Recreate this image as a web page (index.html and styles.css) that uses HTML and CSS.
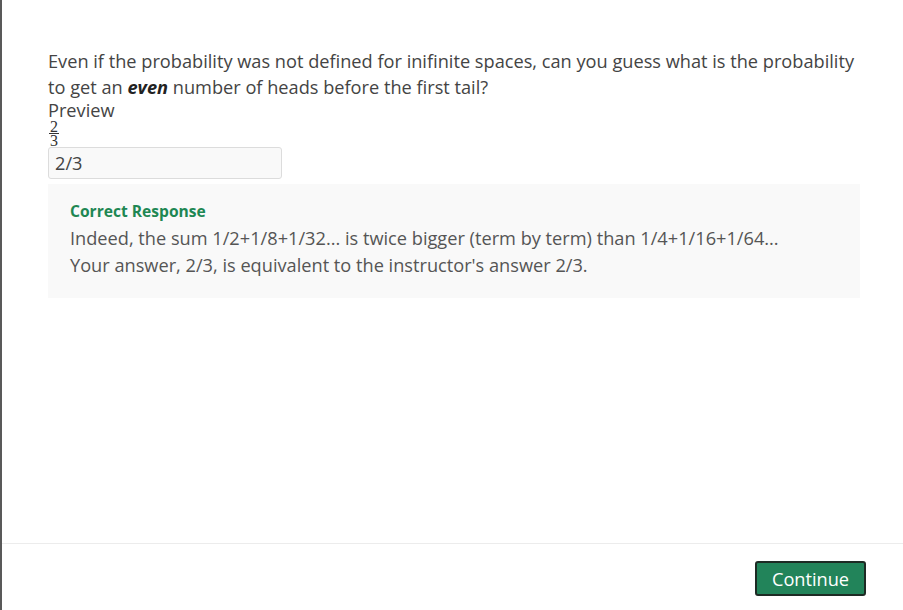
FILE: index.html
```html
<!DOCTYPE html>
<html lang="en">
<head>
<meta charset="utf-8">
<title>Question</title>
<link rel="stylesheet" href="styles.css">
</head>
<body>
<div class="page">
  <main class="content">
    <p class="question">Even if the probability was not defined for inifinite spaces, can you guess what is the probability to get an <em>even</em> number of heads before the first tail?</p>
    <div class="preview-label">Preview</div>
    <div class="frac"><span class="num">2</span><span class="den">3</span></div>
    <div class="answer-row">
      <input class="answer" type="text" value="2/3">
    </div>
    <section class="feedback">
      <h3 class="feedback-title">Correct Response</h3>
      <p class="feedback-text">Indeed, the sum 1/2+1/8+1/32... is twice bigger (term by term) than 1/4+1/16+1/64...<br>Your answer, 2/3, is equivalent to the instructor's answer 2/3.</p>
    </section>
  </main>
  <footer class="footer">
    <button class="continue" type="button">Continue</button>
  </footer>
</div>
</body>
</html>
```

FILE: styles.css
```css
html, body {
  margin: 0;
  padding: 0;
  background: #fff;
}
body {
  font-family: "Open Sans", "Liberation Sans", sans-serif;
  color: #444;
  border-left: 2px solid #595959;
  height: 610px;
  box-sizing: border-box;
  overflow: hidden;
}
.page {
  display: flex;
  flex-direction: column;
  height: 100%;
}
.content {
  flex: 1;
  padding: 48px 43px 0 46px;
}
.question {
  margin: 0;
  font-size: 18.2px;
  line-height: 26px;
  color: #444;
}
.question em {
  font-weight: 700;
  font-style: italic;
  color: #222;
}
.preview-label {
  font-size: 18.2px;
  line-height: 20px;
  color: #444;
}
.frac {
  display: inline-flex;
  flex-direction: column;
  align-items: center;
  font-family: "Liberation Serif", "DejaVu Serif", serif;
  font-size: 16px;
  line-height: 13px;
  height: 27px;
  margin-left: 1px;
  color: #333;
  vertical-align: top;
}
.frac .num {
  border-bottom: 1px solid #333;
  padding: 0 1px;
}
.answer-row {
  display: block;
}
.answer {
  display: block;
  width: 234px;
  height: 32px;
  box-sizing: border-box;
  margin: 0;
  padding: 0 6px;
  border: 1px solid #dcdcdc;
  border-radius: 3px;
  background: #f9f9f9;
  font-family: "Open Sans", "Liberation Sans", sans-serif;
  font-size: 18.2px;
  color: #444;
}
.feedback {
  margin-top: 5px;
  background: #f9f9f9;
  padding: 16px 22px 19px;
}
.feedback-title {
  margin: 0;
  font-size: 15.6px;
  line-height: 22px;
  font-weight: 700;
  color: #1e8753;
}
.feedback-text {
  margin: 3px 0 0;
  font-size: 18.2px;
  line-height: 27px;
  color: #555;
}
.footer {
  height: 67px;
  border-top: 1px solid #ececec;
  display: flex;
  justify-content: flex-end;
  align-items: flex-start;
  padding: 17px 37px 0 0;
  box-sizing: border-box;
}
.continue {
  width: 111px;
  height: 35px;
  background: #22845a;
  color: #fff;
  border: 2px solid #1d2b24;
  border-radius: 3px;
  font-family: "Open Sans", "Liberation Sans", sans-serif;
  font-size: 18.2px;
  padding: 0;
}
```
